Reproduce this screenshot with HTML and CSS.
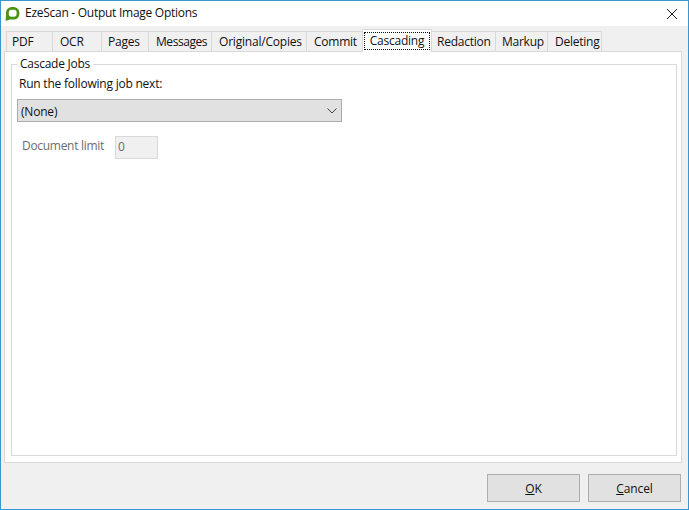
FILE: index.html
```html
<!DOCTYPE html>
<html lang="en">
<head>
<meta charset="utf-8">
<title>EzeScan - Output Image Options</title>
<link rel="stylesheet" href="styles.css">
</head>
<body>
<div class="window">
  <header class="titlebar">
    <svg class="app-icon" width="16" height="16" viewBox="0 0 16 16">
      <rect x="3.4" y="2.4" width="10.6" height="9.8" rx="4.2" fill="none" stroke="#4a9412" stroke-width="2.8"/>
      <path d="M2 9 L1.6 15 L7 13 Z" fill="#4a9412"/>
    </svg>
    <span class="title">EzeScan - Output Image Options</span>
    <svg class="close" width="12" height="12" viewBox="0 0 12 12">
      <path d="M1 1 L11 11 M11 1 L1 11" stroke="#1a1a1a" stroke-width="1" fill="none"/>
    </svg>
  </header>
  <main class="body">
    <nav class="tabs">
      <div class="tab w-pdf">PDF</div>
      <div class="tab w-ocr">OCR</div>
      <div class="tab w-pages">Pages</div>
      <div class="tab w-messages">Messages</div>
      <div class="tab w-original">Original/Copies</div>
      <div class="tab w-commit">Commit</div>
      <div class="tab active w-cascading"><span class="focus">Cascading</span></div>
      <div class="tab w-redaction">Redaction</div>
      <div class="tab w-markup">Markup</div>
      <div class="tab w-deleting">Deleting</div>
    </nav>
    <section class="panel">
      <div class="group">
        <div class="legend">Cascade Jobs</div>
        <div class="field-label">Run the following job next:</div>
        <div class="combo">
          <span>(None)</span>
          <svg width="10" height="6" viewBox="0 0 10 6"><path d="M0.5 0.5 L5 5 L9.5 0.5" fill="none" stroke="#444" stroke-width="1"/></svg>
        </div>
        <div class="limit-row">
          <span class="limit-label">Document limit</span>
          <div class="limit-input">0</div>
        </div>
      </div>
    </section>
    <footer class="actions">
      <div class="btn"><span><u>O</u>K</span></div>
      <div class="btn"><span><u>C</u>ancel</span></div>
    </footer>
  </main>
</div>
</body>
</html>
```
FILE: styles.css
```css
* { box-sizing: border-box; }
html, body { margin: 0; padding: 0; }
body {
  font-family: "Open Sans", "Noto Sans", "Liberation Sans", sans-serif;
  font-size: 12px;
  color: #111;
}
.window {
  width: 689px;
  height: 510px;
  border: 1px solid #3a96d0;
  display: flex;
  flex-direction: column;
  background: #f0f0f0;
  overflow: hidden;
}
.titlebar {
  height: 25px;
  flex: none;
  background: #fff;
  display: flex;
  align-items: center;
  padding: 0 10px 0 3px;
}
.app-icon { flex: none; margin-right: 5px; }
.title { flex: 1; font-size: 12px; letter-spacing: -0.27px; padding-bottom: 2px; }
.close { flex: none; }
.body {
  flex: 1;
  display: flex;
  flex-direction: column;
  padding: 3px 6px 7px 3px;
}
.tabs {
  height: 22px;
  flex: none;
  display: flex;
  align-items: flex-start;
  padding: 2px 0 0 2px;
  position: relative;
  z-index: 1;
}
.tab {
  height: 20px;
  background: #f0f0f0;
  border: 1px solid #d9d9d9;
  border-bottom: none;
  border-left-width: 0;
  display: flex;
  align-items: center;
  padding: 0 0 1px 6px;
  letter-spacing: -0.25px;
  white-space: nowrap;
}
.tab:first-child { border-left-width: 1px; padding-left: 5px; }
.tab.active {
  height: 23px;
  margin-top: -2px;
  margin-left: -1px;
  background: #fff;
  border: 1px solid #d9d9d9;
  border-bottom: none;
  padding: 2px 1px 2px;
  align-items: stretch;
}
.focus {
  flex: 1;
  border: 1px dotted #111;
  display: flex;
  align-items: center;
  justify-content: center;
  padding-bottom: 2px;
}
.w-pdf { width: 47px; }
.w-ocr { width: 49px; padding-left: 7px; }
.w-pages { width: 47px; }
.w-messages { width: 63px; padding-left: 7px; letter-spacing: -0.45px; }
.w-original { width: 95px; padding-left: 7px; letter-spacing: -0.2px; }
.w-commit { width: 56px; padding-left: 7px; }
.w-cascading { width: 70px; }
.w-redaction { width: 64px; padding-left: 5px; }
.w-markup { width: 52px; }
.w-deleting { width: 54px; padding-left: 7px; }
.panel {
  flex: none;
  height: 412px;
  background: #fff;
  border: 1px solid #d9d9d9;
  padding: 12px 4px 6px 6px;
}
.group {
  height: 100%;
  border: 1px solid #d9d9d9;
  position: relative;
  padding: 11px 5px 0 5px;
}
.legend {
  position: absolute;
  top: -9px;
  left: 5px;
  background: #fff;
  padding: 0 3px;
  line-height: 16px;
  letter-spacing: -0.25px;
}
.field-label { line-height: 16px; letter-spacing: -0.22px; margin-left: 2px; }
.combo {
  width: 325px;
  height: 23px;
  margin-top: 7px;
  background: #e1e1e1;
  border: 1px solid #adadad;
  display: flex;
  align-items: center;
  justify-content: space-between;
  padding: 1px 4px 0 3px;
  letter-spacing: -0.2px;
}
.limit-row {
  display: flex;
  align-items: center;
  margin-top: 14px;
  padding-left: 5px;
}
.limit-label { width: 93px; margin-bottom: 4px; color: #6d6d6d; letter-spacing: -0.3px; }
.limit-input {
  width: 43px;
  height: 23px;
  background: #f0f0f0;
  border: 1px solid #d9d9d9;
  color: #6d6d6d;
  padding-left: 2px;
  line-height: 20px;
}
.actions {
  flex: 1;
  display: flex;
  justify-content: flex-end;
  align-items: flex-end;
  gap: 8px;
  padding-right: 1px;
}
.btn {
  width: 93px;
  height: 28px;
  background: #e1e1e1;
  border: 1px solid #adadad;
  display: flex;
  align-items: center;
  justify-content: center;
  letter-spacing: -0.1px;
}
```
